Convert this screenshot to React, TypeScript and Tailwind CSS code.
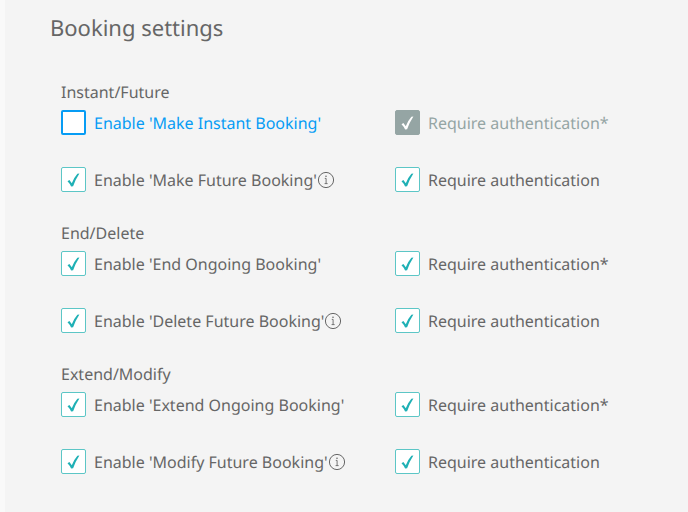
import { useId, useState } from "react";

type SettingProps = {
  label: string;
  checked?: boolean;
  disabled?: boolean;
  info?: boolean;
  highlighted?: boolean;
};

function Setting({ label, checked = false, disabled = false, info = false, highlighted = false }: SettingProps) {
  const id = useId();
  const [on, setOn] = useState(checked);
  const box = disabled
    ? "border border-[#95a5a4] bg-[#95a5a4]"
    : highlighted
      ? "border-2 border-[#069cf4] bg-white"
      : "border border-[#5cc6c6] bg-white";
  const text = disabled ? "text-[#95a5a4]" : highlighted ? "text-[#069cf4]" : "text-[#666666]";
  return (
    <div className="flex h-[25px] items-center">
      <span className="grid shrink-0">
        <input
          id={id}
          type="checkbox"
          checked={on}
          disabled={disabled}
          onChange={(e) => setOn(e.target.checked)}
          className={`col-start-1 row-start-1 size-[25px] appearance-none rounded-[2px] ${box}`}
        />
        {on && (
          <svg
            viewBox="0 0 25 25"
            className={`pointer-events-none col-start-1 row-start-1 size-[25px] ${disabled ? "text-white" : "text-[#1fb0b5]"}`}
            fill="currentColor"
            aria-hidden="true"
          >
            <path d="M6.5 14.2 8.4 13.1 10.8 16.2Q13 10.6 16.4 6.8L18.4 6.6Q14.6 12.4 12.1 19.2L10.1 19.5Q8.8 16.4 6.5 14.2Z" />
          </svg>
        )}
      </span>
      <label htmlFor={id} className={`ml-2 whitespace-nowrap ${text}`}>
        {label}
      </label>
      {info && (
        <button type="button" aria-label="More information" className="text-[#666666]">
          <svg viewBox="0 0 18 18" className="size-[18px]" fill="none" stroke="currentColor" aria-hidden="true">
            <circle cx="9" cy="9" r="7.6" />
            <path d="M7.8 7.4H9.1V12.6M7.6 12.6H10.6" strokeWidth="0.9" />
            <circle cx="9" cy="5.2" r="0.8" fill="currentColor" stroke="none" />
          </svg>
        </button>
      )}
    </div>
  );
}

function Group({ title, rows }: { title: string; rows: [SettingProps, SettingProps][] }) {
  return (
    <section>
      <h2 className="mb-[6px] leading-6">{title}</h2>
      <div className="grid gap-y-8">
        {rows.map(([left, right]) => (
          <div key={left.label} className="grid grid-cols-[334px_1fr]">
            <Setting {...left} />
            <Setting {...right} />
          </div>
        ))}
      </div>
    </section>
  );
}

export default function App() {
  return (
    <main className="min-h-screen border-l-[5px] border-[#f9f9f9] bg-[#f4f4f4] pt-3 pr-6 pl-[45px] font-['Noto_Sans',sans-serif] text-base text-[#666666] [text-rendering:geometricPrecision]">
      <h1 className="text-[22px] leading-8">Booking settings</h1>
      <div className="mt-9 ml-[11px] grid gap-y-[29px]">
        <Group
          title="Instant/Future"
          rows={[
            [
              { label: "Enable 'Make Instant Booking'", highlighted: true },
              { label: "Require authentication*", checked: true, disabled: true },
            ],
            [
              { label: "Enable 'Make Future Booking'", checked: true, info: true },
              { label: "Require authentication", checked: true },
            ],
          ]}
        />
        <Group
          title="End/Delete"
          rows={[
            [
              { label: "Enable 'End Ongoing Booking'", checked: true },
              { label: "Require authentication*", checked: true },
            ],
            [
              { label: "Enable 'Delete Future Booking'", checked: true, info: true },
              { label: "Require authentication", checked: true },
            ],
          ]}
        />
        <Group
          title="Extend/Modify"
          rows={[
            [
              { label: "Enable 'Extend Ongoing Booking'", checked: true },
              { label: "Require authentication*", checked: true },
            ],
            [
              { label: "Enable 'Modify Future Booking'", checked: true, info: true },
              { label: "Require authentication", checked: true },
            ],
          ]}
        />
      </div>
    </main>
  );
}
